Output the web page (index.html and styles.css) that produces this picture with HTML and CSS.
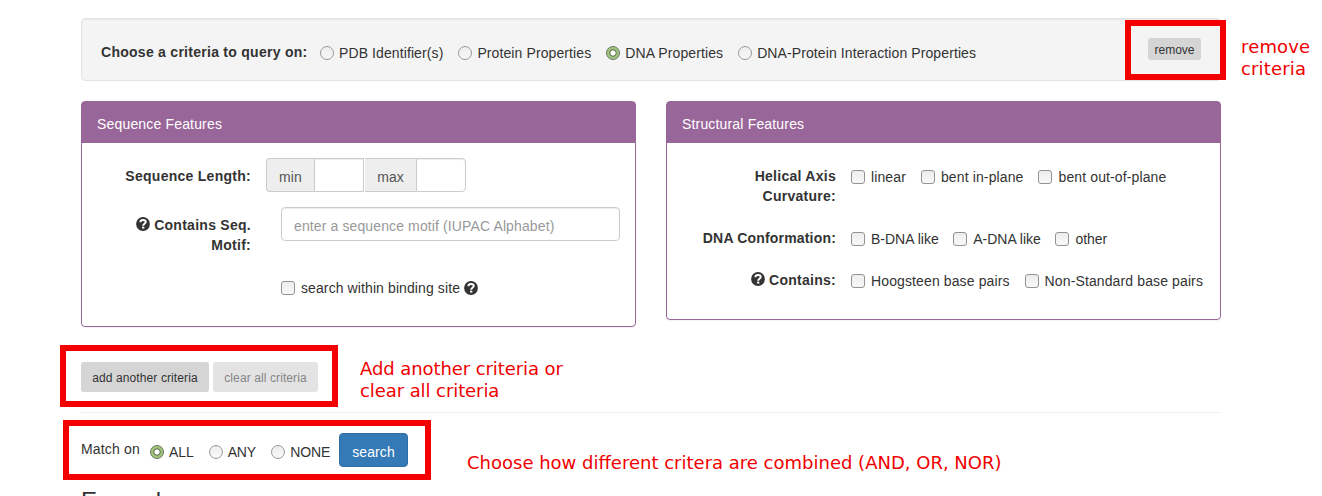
FILE: index.html
```html
<!DOCTYPE html>
<html lang="en">
<head>
<meta charset="utf-8">
<title>Query</title>
<link rel="stylesheet" href="styles.css">
</head>
<body>
<svg class="defs" width="0" height="0" aria-hidden="true">
  <symbol id="help" viewBox="0 0 14 14">
    <circle cx="7" cy="7" r="6.9" fill="#333"/>
    <path d="M4.4 5.2C4.4 2.2 9.7 2.2 9.7 5C9.7 6.9 7.2 6.6 7.2 8.8" fill="none" stroke="#fff" stroke-width="2"/>
    <rect x="6.1" y="9.6" width="2.2" height="2" fill="#fff"/>
  </symbol>
</svg>
<main class="container">
  <section class="well">
    <span class="well-title">Choose a criteria to query on:</span>
    <div class="options criteria">
      <label class="option"><i class="radio"></i>PDB Identifier(s)</label>
      <label class="option"><i class="radio"></i>Protein Properties</label>
      <label class="option"><i class="radio checked"></i>DNA Properties</label>
      <label class="option"><i class="radio"></i>DNA-Protein Interaction Properties</label>
    </div>
    <button class="btn btn-xs">remove</button>
  </section>

  <div class="panels">
    <section class="panel">
      <h2 class="panel-heading">Sequence Features</h2>
      <div class="panel-body sequence">
        <div class="group">
          <div class="label">Sequence Length:</div>
          <div class="input-group">
            <span class="addon addon-min">min</span><span class="cell"></span>
            <span class="addon addon-max">max</span><span class="cell cell-last"></span>
          </div>
        </div>
        <div class="group motif">
          <div class="label"><svg class="help"><use href="#help"/></svg> Contains Seq. Motif:</div>
          <input class="input" type="text" placeholder="enter a sequence motif (IUPAC Alphabet)">
        </div>
        <label class="option binding"><i class="check"></i>search within binding site&nbsp;<svg class="help"><use href="#help"/></svg></label>
      </div>
    </section>
    <section class="panel">
      <h2 class="panel-heading">Structural Features</h2>
      <div class="panel-body structural">
        <div class="group">
          <div class="label">Helical Axis Curvature:</div>
          <div class="options">
            <label class="option"><i class="check"></i>linear</label>
            <label class="option"><i class="check"></i>bent in-plane</label>
            <label class="option"><i class="check"></i>bent out-of-plane</label>
          </div>
        </div>
        <div class="group conformation">
          <div class="label">DNA Conformation:</div>
          <div class="options">
            <label class="option"><i class="check"></i>B-DNA like</label>
            <label class="option"><i class="check"></i>A-DNA like</label>
            <label class="option"><i class="check"></i>other</label>
          </div>
        </div>
        <div class="group">
          <div class="label"><svg class="help"><use href="#help"/></svg> Contains:</div>
          <div class="options">
            <label class="option"><i class="check"></i>Hoogsteen base pairs</label>
            <label class="option"><i class="check"></i>Non-Standard base pairs</label>
          </div>
        </div>
      </div>
    </section>
  </div>

  <div class="actions">
    <button class="btn btn-sm btn-add">add another criteria</button>
    <button class="btn btn-sm btn-clear disabled">clear all criteria</button>
  </div>
  <div class="rule"></div>
  <div class="match">
    <span class="match-title">Match on</span>
    <div class="options match-options">
      <label class="option"><i class="radio checked"></i>ALL</label>
      <label class="option"><i class="radio"></i>ANY</label>
      <label class="option"><i class="radio"></i>NONE</label>
    </div>
    <button class="btn btn-primary">search</button>
  </div>
  <h3 class="examples">Examples</h3>
</main>

<div class="frame frame-remove"></div>
<div class="frame frame-add"></div>
<div class="frame frame-match"></div>
<p class="note note-remove">remove<br>criteria</p>
<p class="note note-add">Add another criteria or<br>clear all criteria</p>
<p class="note note-match">Choose how different critera are combined (AND, OR, NOR)</p>
</body>
</html>
```
FILE: styles.css
```css
* { box-sizing: border-box; }
body {
  position: relative;
  width: 1322px;
  height: 496px;
  margin: 0;
  overflow: hidden;
  background: #fff;
  color: #333;
  font: 14px/20px "Liberation Sans", Arial, sans-serif;
}
.defs { position: absolute; }
.container { width: 1140px; margin-left: 81px; padding-top: 18px; }

.well {
  display: flex;
  align-items: flex-start;
  height: 63px;
  padding: 19px;
  border: 1px solid #e3e3e3;
  border-radius: 4px;
  background: #f4f4f4;
  box-shadow: inset 0 1px 1px rgba(0, 0, 0, .05);
}
.well-title {
  width: 219px;
  margin-top: 4px;
  font-weight: bold;
  letter-spacing: .27px;
  white-space: nowrap;
}

.options { display: flex; gap: 15px; letter-spacing: .1px; }
.criteria { margin-top: 5px; }
.option { display: flex; align-items: center; white-space: nowrap; }
.radio, .check {
  flex: none;
  width: 14px;
  height: 14px;
  margin-right: 5px;
  border: 1px solid #999;
  background: linear-gradient(#eee, #f8f8f8);
}
.radio { border-radius: 50%; }
.check { margin-right: 6px; border-color: #929292; border-radius: 3px; }
.radio.checked {
  border-color: #6b7160;
  background: radial-gradient(circle, #fff 0 2.2px, #768a66 2.9px 3.5px, #a0c67c 4.1px);
}

.btn {
  padding: 2px 0 0;
  border: 0;
  border-radius: 3px;
  background: #d5d5d5;
  color: #333;
  font: 12px/18px "Liberation Sans", Arial, sans-serif;
  letter-spacing: .1px;
  text-align: center;
  white-space: nowrap;
}
.btn-xs { width: 53px; height: 22px; margin-left: auto; letter-spacing: 0; }
.btn-sm { height: 30px; }
.btn-add { width: 128px; }
.btn-clear { width: 105px; }
.btn.disabled { background: #e3e3e3; color: #858585; }
.btn-primary {
  width: 69px;
  height: 34px;
  padding-top: 3px;
  border: 1px solid #2e6da4;
  border-radius: 4px;
  background: #337ab7;
  color: #fff;
  font-size: 14px;
}

.panels { display: flex; align-items: flex-start; gap: 30px; margin-top: 20px; }
.panel {
  width: 555px;
  border: 1px solid #996699;
  border-radius: 4px;
  box-shadow: 0 1px 1px rgba(0, 0, 0, .05);
}
.panel-heading {
  height: 41px;
  margin: 0;
  padding: 12px 15px 0;
  background: #996699;
  color: #fff;
  font-size: 14px;
  font-weight: normal;
  letter-spacing: .17px;
  line-height: 20px;
}
.panel-body { padding: 15px; }
.sequence { height: 183px; }
.structural { height: 176px; }
.group { display: flex; align-items: flex-start; margin-bottom: 15px; }
.label {
  width: 154px;
  margin-right: 15px;
  padding-top: 8px;
  font-weight: bold;
  letter-spacing: .27px;
  text-align: right;
}
.motif .label { padding-left: 20px; }
.structural .label { padding-left: 15px; }
.conformation .label { letter-spacing: .18px; }
.structural .group { margin-bottom: 14px; }
.structural .options { height: 28px; padding-top: 9px; letter-spacing: .12px; }
.structural .option { height: 20px; }
.structural .conformation .options { gap: 14.5px; letter-spacing: 0; }
.help { width: 14px; height: 14px; vertical-align: -1px; }

.input-group { display: flex; height: 34px; }
.addon {
  border: 1px solid #ccc;
  border-right: 0;
  background: #eee;
  color: #555;
  letter-spacing: .1px;
  line-height: 36px;
  text-align: center;
}
.addon-min { width: 48px; border-radius: 4px 0 0 4px; }
.cell { width: 50px; border: 1px solid #ccc; box-shadow: inset 0 1px 1px rgba(0, 0, 0, .075); }
.addon-max { width: 51px; margin-left: 1px; border-left: 0; }
.cell-last { border-radius: 0 4px 4px 0; }
.input {
  width: 339px;
  height: 34px;
  margin-left: 15px;
  padding: 3px 12px 0;
  border: 1px solid #ccc;
  border-radius: 4px;
  box-shadow: inset 0 1px 1px rgba(0, 0, 0, .075);
  font: inherit;
  letter-spacing: .12px;
}
.input::placeholder { color: #999; opacity: 1; }
.binding { margin: 23px 0 0 184px; letter-spacing: .1px; }
.binding .help { margin-bottom: 1px; }

.actions { display: flex; gap: 4px; margin-top: 35px; }
.rule { height: 1px; margin-top: 20px; background: #eee; }
.match { display: flex; align-items: flex-start; margin-top: 20px; }
.match-title { width: 69px; margin-top: 6px; letter-spacing: .17px; }
.match-options { width: 189px; margin-top: 9px; letter-spacing: -.1px; }
.examples { margin: 21px 0 0; font-size: 24px; font-weight: normal; line-height: 26px; }

/* annotations laid over the form */
.frame { position: absolute; border: 6px solid #f50000; }
.frame-remove { left: 1125px; top: 20px; width: 101px; height: 60px; }
.frame-add { left: 60px; top: 345px; width: 278px; height: 62px; }
.frame-match { left: 63px; top: 420px; width: 368px; height: 60px; }
.note {
  position: absolute;
  margin: 0;
  color: #f00000;
  font: 18px/22px "DejaVu Sans", sans-serif;
  white-space: nowrap;
}
.note-remove { left: 1241px; top: 36px; letter-spacing: .15px; }
.note-add { left: 360px; top: 358px; letter-spacing: -.08px; }
.note-match { left: 467px; top: 452px; }
```
